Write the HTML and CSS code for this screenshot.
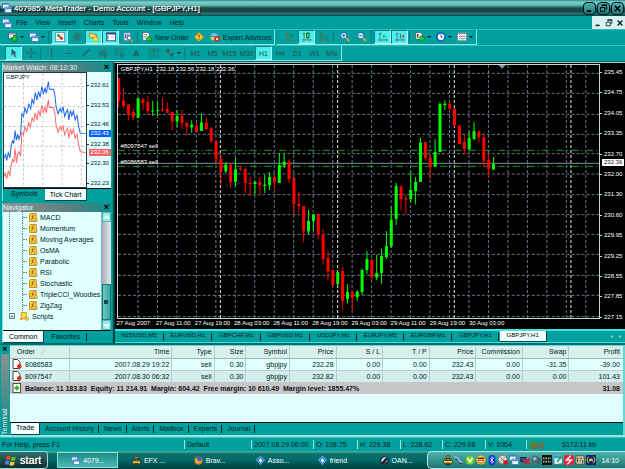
FILE: index.html
```html
<!DOCTYPE html>
<html lang="en">
<head>
<meta charset="utf-8">
<title>407985: MetaTrader - Demo Account - [GBPJPY,H1]</title>
<link rel="stylesheet" href="styles.css">
</head>
<body>
<svg class="defs" aria-hidden="true">
  <symbol id="i-windows" viewBox="0 0 12 12"><rect x=".5" y=".5" width="8" height="6" fill="#dff" stroke="#47b"/><path d="M1 1.5h7" stroke="#36c"/><rect x="3.5" y="5" width="8" height="6.5" fill="#eff" stroke="#47b"/><path d="M4 6.5h7" stroke="#58d" stroke-width="2"/></symbol>
  <symbol id="i-newchart" viewBox="0 0 12 12"><rect x=".5" y="1" width="9" height="7" fill="#eee" stroke="#456"/><path d="M1 2h8" stroke="#79b" stroke-width="2"/><path d="M8 4v8M4 8h8" stroke="#063" stroke-width="4"/><path d="M8 4.800v6.400M4.800 8h6.400" stroke="#2d2" stroke-width="2.200"/></symbol>
  <symbol id="i-market" viewBox="0 0 12 12"><rect x=".5" y=".5" width="11" height="11" fill="#fff" stroke="#68a"/><path d="M3 3l3 3" stroke="#2a3" stroke-width="3"/><path d="M6 6l3 3" stroke="#d32" stroke-width="3"/><path d="M8 3h2M2 9h2" stroke="#999"/></symbol>
  <symbol id="i-cross" viewBox="0 0 12 12" fill="none" stroke="#47605f"><circle cx="6" cy="6" r="3.500"/><path d="M6 0v12M0 6h12"/></symbol>
  <symbol id="i-navstar" viewBox="0 0 12 12"><path d="M.5 1.500h4l1 1.500H9v4H.5z" fill="#fd6" stroke="#a70"/><path d="M8 4.500l1.200 2.500 2.800.3-2 2 .5 2.700L8 10.700 5.500 12l.5-2.700-2-2 2.800-.3z" fill="#fe4" stroke="#b80" stroke-width=".6"/></symbol>
  <symbol id="i-terminal" viewBox="0 0 12 12"><rect x=".5" y="1" width="11" height="9.500" fill="#fff" stroke="#347"/><path d="M1 2h10" stroke="#347" stroke-width="2"/><path d="M2 4v5" stroke="#68b" stroke-width="2"/><path d="M5 5h5M5 7h5" stroke="#ccc"/></symbol>
  <symbol id="i-tester" viewBox="0 0 12 12"><rect x="1" y=".5" width="8" height="10" fill="#cde" stroke="#57a"/><path d="M3 7V3M5 8V2M7 6V3" stroke="#269"/><circle cx="7.500" cy="7" r="2.500" fill="#dff" stroke="#446"/><path d="M9.500 9l2.300 2.500" stroke="#d92" stroke-width="2"/></symbol>
  <symbol id="i-order" viewBox="0 0 12 12"><path d="M1 .5h6l2 2V10H1z" fill="#fff" stroke="#567"/><path d="M2.500 3h4M2.500 5h4M2.500 7h3" stroke="#888"/><path d="M8.500 5v7M5 8.500h7" stroke="#064" stroke-width="3.500"/><path d="M8.500 5.500v6M5.500 8.500h6" stroke="#2c3" stroke-width="2"/></symbol>
  <symbol id="i-diamond" viewBox="0 0 12 12"><path d="M6 .5L11.500 6 6 11.500.5 6z" fill="#fc3" stroke="#c80"/><path d="M6 3v3.500M6 8v1.200" stroke="#632" stroke-width="1.400"/></symbol>
  <symbol id="i-expert" viewBox="0 0 12 12"><ellipse cx="5" cy="6.500" rx="4.500" ry="3.500" fill="#ec5"/><path d="M.5 5C1 0 9 0 9.500 5z" fill="#7bf"/><path d="M0 5.500h10" stroke="#379"/><circle cx="8.500" cy="8.500" r="3.300" fill="#d22"/><rect x="7.300" y="7.300" width="2.400" height="2.400" fill="#fff"/></symbol>
  <symbol id="i-bars" viewBox="0 0 12 12" fill="none"><path d="M2.500 1v10M0 9.500h11M1 3l1.500-2L4 3M9.500 8l1.500 1.500L9.500 11" stroke="#764"/><path d="M6.500 3v5M5 7h1.500M6.500 4H8M9.500 1v5" stroke="#084"/></symbol>
  <symbol id="i-candles" viewBox="0 0 12 12" fill="none"><path d="M2.500 1v10M0 9.500h11M1 3l1.500-2L4 3M9.500 8l1.500 1.500L9.500 11" stroke="#764"/><path d="M7 0v9" stroke="#053"/><rect x="5.500" y="1.500" width="3" height="5" fill="#4e4" stroke="#053"/></symbol>
  <symbol id="i-line" viewBox="0 0 12 12" fill="none"><path d="M2.500 1v10M0 9.500h11M1 3l1.500-2L4 3M9.500 8l1.500 1.500L9.500 11" stroke="#764"/><path d="M2.500 7C5 2 6 3 7 4.500S9 7 11 7" stroke="#084"/></symbol>
  <symbol id="i-zoomin" viewBox="0 0 12 12"><path d="M7 7l4 4" stroke="#da3" stroke-width="2.400"/><circle cx="4.500" cy="4.500" r="3.700" fill="#dff" stroke="#25a"/><path d="M2.500 4.500h4M4.500 2.500v4" stroke="#25c" stroke-width="1.200"/></symbol>
  <symbol id="i-zoomout" viewBox="0 0 12 12"><path d="M7 7l4 4" stroke="#da3" stroke-width="2.400"/><circle cx="4.500" cy="4.500" r="3.700" fill="#dff" stroke="#25a"/><path d="M2.500 4.500h4" stroke="#25c" stroke-width="1.200"/></symbol>
  <symbol id="i-scroll" viewBox="0 0 12 12" fill="none"><path d="M2.500 1v10M0 9.500h11M1 3l1.500-2L4 3M9.500 8l1.500 1.500L9.500 11" stroke="#567"/><path d="M6 3l4 2.200L6 7.500z" fill="#3b5"/></symbol>
  <symbol id="i-shift" viewBox="0 0 12 12" fill="none"><path d="M2.500 1v10M0 9.500h11M1 3l1.500-2L4 3M9.500 8l1.500 1.500L9.500 11" stroke="#567"/><path d="M6.500 2v6" stroke="#265"/><path d="M11 3L7.500 5.200 11 7.500z" fill="#c43"/></symbol>
  <symbol id="i-indic" viewBox="0 0 12 12"><path d="M1 .5h6l1.500 2V9H1z" fill="#fff" stroke="#555"/><path d="M3 7V3h2M3 5h2" stroke="#333" fill="none"/><path d="M8 4.500v7M4.500 8h7" stroke="#063" stroke-width="3.500"/><path d="M8 5v6M5 8h6" stroke="#2d2" stroke-width="2"/></symbol>
  <symbol id="i-clock" viewBox="0 0 12 12"><circle cx="6" cy="6" r="4.800" fill="#eff" stroke="#25c" stroke-width="2"/><path d="M6 3v3.300h2" fill="none" stroke="#234"/></symbol>
  <symbol id="i-template" viewBox="0 0 12 12"><rect x=".5" y="1" width="11" height="9.500" fill="#fff" stroke="#789"/><path d="M1 2h10" stroke="#79b" stroke-width="1.500"/><path d="M2 6l2-1.500L6 6l2-1 2 .5" fill="none" stroke="#c33"/><path d="M2 8.500L4 7.500l2 1 4-1" fill="none" stroke="#396"/></symbol>
  <symbol id="i-cursor" viewBox="0 0 12 12"><path d="M3 .5l6.500 6H6.800l1.700 3.800-1.600.7L5.200 7.300 3 9.300z" fill="#456"/></symbol>
  <symbol id="i-plus" viewBox="0 0 12 12"><path d="M6 0v4.500M6 7.500V12M0 6h4.500M7.500 6H12M5.500 6h1" stroke="#3f5555" stroke-width="1.300"/></symbol>
  <symbol id="i-vline" viewBox="0 0 12 12"><path d="M5.500 1v10" stroke="#3f5555" stroke-width="1.300"/></symbol>
  <symbol id="i-hline" viewBox="0 0 12 12"><path d="M1.500 6.500h9" stroke="#3f5555" stroke-width="1.300"/></symbol>
  <symbol id="i-trend" viewBox="0 0 12 12"><path d="M1.500 10.500l9-9" stroke="#3f5555" stroke-width="1.300"/></symbol>
  <symbol id="i-channel" viewBox="0 0 12 12"><path d="M0 9l9-8M2 11l9-8M2 4l5 5M4 2l5 5M8 8v4M8 8h3M8 10h2M1 5h4" fill="none" stroke="#3f5555"/></symbol>
  <symbol id="i-fibo" viewBox="0 0 12 12"><path d="M0 1.500h10M0 4.500h10M0 7.500h10" stroke="#3f5555" stroke-dasharray="2 1"/><path d="M8 8v4M8 8.500h3M8 10.500h2" stroke="#3f5555"/></symbol>
  <symbol id="i-label" viewBox="0 0 12 12"><rect x="1" y="1" width="10" height="10" fill="none" stroke="#3f5555" stroke-dasharray="1 1"/><path d="M3 3.500h6M6 3.500v6" stroke="#3f5555"/></symbol>
  <symbol id="i-arrows" viewBox="0 0 12 12"><path d="M1 4l3-3 2 3-2 2zM7 6l4 1-3 4-2-2z" fill="#3f5555"/><path d="M3 5l5 4" stroke="#3f5555"/></symbol>
  <symbol id="i-fn" viewBox="0 0 10 10"><path d="M.5 1.500l1-1H8v7l1 1-1 1H.5z" fill="#fc4" stroke="#b80"/><path d="M6 2.500C4.500 1.500 4 3 4 4.500S3.500 8 2.300 7.300M2.500 4.500h3" fill="none" stroke="#852" stroke-width=".9"/><circle cx="7.500" cy="7.500" r="1.500" fill="#fe8" stroke="#a70" stroke-width=".8"/></symbol>
  <symbol id="i-script" viewBox="0 0 10 10"><path d="M1.500.5H7v7H3L.5 9V7h1z" fill="#fc4" stroke="#c90"/><path d="M3 2.500h3M3 4.500h3" stroke="#fe9"/><circle cx="7.800" cy="7.600" r="1.700" fill="#fe6" stroke="#b80" stroke-width=".8"/></symbol>
  <symbol id="i-trade" viewBox="0 0 10 10"><path d="M1 .5h4.500L8 3v6.500H1z" fill="#fff" stroke="#444"/><circle cx="7.300" cy="7.300" r="2.300" fill="#d31"/></symbol>
  <symbol id="i-balance" viewBox="0 0 10 10"><rect x="1" y=".5" width="7.500" height="9" fill="#fff" stroke="#555"/><path d="M4.800 2.500v5M2.300 5h5" stroke="#2b2" stroke-width="2"/></symbol>
  <symbol id="i-flag" viewBox="0 0 12 12"><path d="M2 1.500c2-1 3-.5 4 0L5 5.500c-1.500-.6-2.500-.5-4 .3z" fill="#e64a19"/><path d="M7 2c1.500.7 3 .7 5 0l-1.200 4C9 6.700 8 6.500 6 5.800z" fill="#6b3"/><path d="M.8 6.800c1.500-.8 2.500-.8 4 0l-1 4c-1.500-.8-2.500-.7-4 0z" fill="#48f"/><path d="M5.800 7c1.600.7 3 .8 4.800 0l-1 4c-1.700.8-3.200.8-4.800 0z" fill="#fc3"/></symbol>
  <symbol id="i-bee" viewBox="0 0 12 12"><circle cx="6" cy="3" r="2.800" fill="#432"/><ellipse cx="6" cy="8" rx="5.500" ry="3.500" fill="#ca3" stroke="#221"/><path d="M1 8h10M4 2.500h4" stroke="#fe9"/><path d="M2 6.500h8M3 10h6" stroke="#221"/></symbol>
  <symbol id="i-fox" viewBox="0 0 12 12"><circle cx="6" cy="6" r="5.500" fill="#e71"/><circle cx="6.500" cy="4.500" r="3.500" fill="#36c"/><path d="M1 3l3 1 2 3 4 0c-1 3-6 4-8 1z" fill="#fa3"/></symbol>
  <symbol id="i-gem" viewBox="0 0 12 12"><path d="M6 .5L11.500 5 6 11.500.5 5z" fill="#27d" stroke="#bdf" stroke-width=".8"/><path d="M6 3l2.500 2.500L6 9 3.500 5.500z" fill="#fff"/></symbol>
  <symbol id="i-disc" viewBox="0 0 12 12"><circle cx="6" cy="6" r="5.700" fill="#223"/><path d="M2 8C1 4 5 .8 9 2 5 3.500 6 6 2 8z" fill="#dee"/><path d="M10 4c1 4-2 6-5 5.500C9 8.500 8 6 10 4z" fill="#89a"/></symbol>
  <symbol id="i-restore" viewBox="0 0 10 10" fill="none" stroke="currentColor"><path d="M3.500 3V1.500h5v4H7"/><path d="M3 1.200h6" stroke-width="1.500"/><rect x="1.500" y="4" width="5" height="4.500"/></symbol>
  <symbol id="i-min" viewBox="0 0 10 10"><path d="M2 8h5" stroke="currentColor" stroke-width="2"/></symbol>
  <symbol id="i-close" viewBox="0 0 10 10"><path d="M2 2l6 6M8 2L2 8" stroke="currentColor" stroke-width="1.800"/></symbol>
  <symbol id="t-dots" viewBox="0 0 12 12"><path d="M1 2l4 2 2 3 4 3" fill="none" stroke="#9be" stroke-width="2"/><path d="M2 5l3 1M6 10h5" stroke="#236"/></symbol>
  <symbol id="t-v" viewBox="0 0 12 12"><circle cx="6" cy="6" r="5.500" fill="#7c2"/><path d="M3 3.500l3 5 3-5" fill="none" stroke="#fff" stroke-width="1.800"/></symbol>
  <symbol id="t-smile" viewBox="0 0 12 12"><circle cx="6" cy="6" r="5.500" fill="#fb3"/><path d="M2 4h8" stroke="#421" stroke-width="1.500"/><path d="M2.500 6.500h7c-1 4-6 4-7 0z" fill="#fff" stroke="#a30"/></symbol>
  <symbol id="t-bt" viewBox="0 0 12 12"><rect x="2" y="0" width="8" height="12" rx="4" fill="#13d"/><path d="M3.800 4l4.200 4-2 2V2l2 2-4.200 4" fill="none" stroke="#fff" stroke-width=".9"/></symbol>
  <symbol id="t-stop" viewBox="0 0 12 12"><circle cx="5.500" cy="5.500" r="5" fill="#ddd" stroke="#888"/><path d="M3 3l5 5M8 3L3 8" stroke="#b55"/><circle cx="9" cy="9" r="2.800" fill="#d11"/></symbol>
  <symbol id="t-off" viewBox="0 0 12 12"><rect x="1" y="3" width="6" height="5" fill="#447" stroke="#113"/><rect x="4" y="6" width="6" height="4" fill="#36a"/><path d="M5 4l7 7M12 4l-7 7" stroke="#e12" stroke-width="1.800"/></symbol>
  <symbol id="t-speak" viewBox="0 0 12 12"><circle cx="5" cy="5" r="4.500" fill="#567"/><circle cx="4.500" cy="4.500" r="2" fill="#abc"/><path d="M8 10c3-1 3-4 2-6" fill="none" stroke="#345" stroke-width="1.500"/></symbol>
  <symbol id="t-grid" viewBox="0 0 12 12"><rect width="12" height="12" fill="#111"/><path d="M1 4h10M1 8h10" stroke="#9a9" stroke-dasharray="2 1" stroke-width="2"/></symbol>
  <symbol id="t-note" viewBox="0 0 12 12"><path d="M1 1h9l1 9-9 1z" fill="#def"/><path d="M1 1h10v3H1z" fill="#39d"/><path d="M5 8l5-6" stroke="#2a3" stroke-width="2"/></symbol>
  <symbol id="t-red" viewBox="0 0 12 12"><rect width="12" height="12" rx="2" fill="#e23"/><path d="M8 1L3 6h6l-5 5" fill="none" stroke="#fff" stroke-width="1.600"/></symbol>
  <symbol id="t-doc" viewBox="0 0 12 12"><rect x="1" y="1" width="10" height="10" fill="#cca" stroke="#543"/><path d="M3 3v6M5 4h4M5 7h2M9 6v4" stroke="#432"/></symbol>
  <symbol id="t-wave" viewBox="0 0 12 12"><rect width="12" height="12" fill="#126"/><path d="M3 2c-2 3-2 5 0 8M9 2c2 3 2 5 0 8M5 4L4 8M7 4l1 4" fill="none" stroke="#fe3"/><circle cx="6" cy="6" r="1.300" fill="#fe3"/></symbol>
</svg>

<div class="desktop">
  <header class="titlebar">
    <svg class="ic"><use href="#i-windows"/></svg>
    <h1>407985: MetaTrader - Demo Account - [GBPJPY,H1]</h1>
    <div class="winbtns">
      <button aria-label="Minimize"><svg><use href="#i-min"/></svg></button>
      <button aria-label="Restore"><svg><use href="#i-restore"/></svg></button>
      <button aria-label="Close"><svg><use href="#i-close"/></svg></button>
    </div>
  </header>

  <nav class="menubar">
    <svg class="ic"><use href="#i-windows"/></svg>
    <button>File</button><button>View</button><button>Insert</button><button>Charts</button><button>Tools</button><button>Window</button><button>Help</button>
    <div class="mdibtns">
      <button aria-label="Minimize chart"><svg><use href="#i-min"/></svg></button>
      <button aria-label="Restore chart"><svg><use href="#i-restore"/></svg></button>
      <button aria-label="Close chart"><svg><use href="#i-close"/></svg></button>
    </div>
  </nav>

  <div class="toolrow">
    <div class="toolbar">
      <button class="tb drop" aria-label="New chart"><svg class="ic"><use href="#i-newchart"/></svg></button>
      <button class="tb drop" aria-label="Profiles"><svg class="ic"><use href="#i-windows"/></svg></button>
      <i class="sep"></i>
      <button class="tb on" aria-label="Market Watch"><svg class="ic"><use href="#i-market"/></svg></button>
      <button class="tb" aria-label="Data window"><svg class="ic"><use href="#i-cross"/></svg></button>
      <button class="tb on" aria-label="Navigator"><svg class="ic"><use href="#i-navstar"/></svg></button>
      <button class="tb on" aria-label="Terminal"><svg class="ic"><use href="#i-terminal"/></svg></button>
      <button class="tb" aria-label="Strategy tester"><svg class="ic"><use href="#i-tester"/></svg></button>
      <i class="sep"></i>
      <button class="tb wide"><svg class="ic"><use href="#i-order"/></svg>New Order</button>
      <button class="tb" aria-label="MetaEditor"><svg class="ic"><use href="#i-diamond"/></svg></button>
      <button class="tb wide"><svg class="ic"><use href="#i-expert"/></svg>Expert Advisors</button>
    </div>
    <div class="toolbar">
      <button class="tb" aria-label="Bar chart"><svg class="ic"><use href="#i-bars"/></svg></button>
      <button class="tb on" aria-label="Candlesticks"><svg class="ic"><use href="#i-candles"/></svg></button>
      <button class="tb" aria-label="Line chart"><svg class="ic"><use href="#i-line"/></svg></button>
      <i class="sep"></i>
      <button class="tb" aria-label="Zoom in"><svg class="ic"><use href="#i-zoomin"/></svg></button>
      <button class="tb" aria-label="Zoom out"><svg class="ic"><use href="#i-zoomout"/></svg></button>
      <i class="sep"></i>
      <button class="tb on" aria-label="Auto scroll"><svg class="ic"><use href="#i-scroll"/></svg></button>
      <button class="tb on" aria-label="Chart shift"><svg class="ic"><use href="#i-shift"/></svg></button>
      <i class="sep"></i>
      <button class="tb drop" aria-label="Indicators"><svg class="ic"><use href="#i-indic"/></svg></button>
      <button class="tb drop" aria-label="Periods"><svg class="ic"><use href="#i-clock"/></svg></button>
      <button class="tb drop" aria-label="Templates"><svg class="ic"><use href="#i-template"/></svg></button>
    </div>
  </div>

  <div class="toolrow">
    <div class="toolbar">
      <button class="tb on" aria-label="Cursor"><svg class="ic"><use href="#i-cursor"/></svg></button>
      <button class="tb" aria-label="Crosshair"><svg class="ic"><use href="#i-plus"/></svg></button>
      <i class="sep"></i>
      <button class="tb" aria-label="Vertical line"><svg class="ic"><use href="#i-vline"/></svg></button>
      <button class="tb" aria-label="Horizontal line"><svg class="ic"><use href="#i-hline"/></svg></button>
      <button class="tb" aria-label="Trendline"><svg class="ic"><use href="#i-trend"/></svg></button>
      <button class="tb" aria-label="Channel"><svg class="ic"><use href="#i-channel"/></svg></button>
      <button class="tb" aria-label="Fibonacci"><svg class="ic"><use href="#i-fibo"/></svg></button>
      <button class="tb letter">A</button>
      <button class="tb" aria-label="Text label"><svg class="ic"><use href="#i-label"/></svg></button>
      <button class="tb drop" aria-label="Arrows"><svg class="ic"><use href="#i-arrows"/></svg></button>
      <i class="sep"></i>
      <button class="tb">M1</button><button class="tb">M5</button><button class="tb">M15</button><button class="tb">M30</button><button class="tb on">H1</button><button class="tb">H4</button><button class="tb">D1</button><button class="tb">W1</button><button class="tb">MN</button>
    </div>
  </div>

  <main class="work">
    <aside class="side">
      <section class="pane market">
        <h2>Market Watch: 08:10:30<button aria-label="Close Market Watch">×</button></h2>
        <div class="tick">
          <div class="tickplot">
            <span class="symbol">GBPJPY</span>
            <svg viewBox="12 40 250 336" preserveAspectRatio="none">
              <path class="tickgrid" d="M72 40v336M131 40v336M190 40v336M249 40v336M12 80h250M12 139h250M12 198h250M12 256h250M12 315h250"/>
              <path class="bid" d="M12 345L16 335 20 352 25 330 30 342 34 310 38 295 42 302 46 262 50 305 54 278 58 272 63 285 67 215 72 222 76 198 82 212 88 186 93 200 98 172 103 182 108 158 113 178 118 150 123 168 128 135 133 155 138 140 142 158 148 118 151 142 164 142 168 160 172 195 178 215 184 198 188 208 193 196 198 222 202 212 207 202 211 232 216 205 220 220 225 206 230 232 236 220 241 252 246 272 262 274"/>
              <path class="ask" d="M12 290L17 280 20 298 25 275 30 290 34 255 38 240 42 247 46 210 50 238 54 222 58 235 63 218 67 160 72 168 76 143 82 158 88 132 94 146 98 118 103 130 108 98 113 120 118 95 123 112 128 80 133 100 138 85 142 100 148 65 151 88 164 88 168 105 172 140 178 160 184 145 188 155 193 140 198 168 202 158 207 148 211 178 216 150 220 166 225 152 230 178 236 165 241 198 246 218 262 219"/>
            </svg>
          </div>
          <ol class="tickaxis">
            <li>232.61</li><li>232.53</li><li>232.46</li><li>232.38</li><li>232.30</li><li>232.23</li>
          </ol>
          <span class="mark ask-mark">232.43</span><span class="mark bid-mark">232.36</span>
        </div>
        <div class="tabs"><button>Symbols</button><button class="cur">Tick Chart</button></div>
      </section>

      <section class="pane navigator">
        <h2>Navigator<button aria-label="Close Navigator">×</button></h2>
        <div class="treebox">
          <div class="tree">
            <ul>
              <li><svg><use href="#i-fn"/></svg>MACD</li>
              <li><svg><use href="#i-fn"/></svg>Momentum</li>
              <li><svg><use href="#i-fn"/></svg>Moving Averages</li>
              <li><svg><use href="#i-fn"/></svg>OsMA</li>
              <li><svg><use href="#i-fn"/></svg>Parabolic</li>
              <li><svg><use href="#i-fn"/></svg>RSI</li>
              <li><svg><use href="#i-fn"/></svg>Stochastic</li>
              <li><svg><use href="#i-fn"/></svg>TripleCCI_Woodies</li>
              <li><svg><use href="#i-fn"/></svg>ZigZag</li>
            </ul>
            <p class="branch"><button aria-label="Expand Scripts">+</button><svg><use href="#i-script"/></svg>Scripts</p>
          </div>
          <div class="scroll">
            <button aria-label="Scroll up"><svg viewBox="0 0 8 8"><path d="M1.500 5.500L4 3l2.500 2.500"/></svg></button>
            <div class="track"><div class="thumb"></div></div>
            <button aria-label="Scroll down"><svg viewBox="0 0 8 8"><path d="M1.500 3L4 5.500 6.500 3"/></svg></button>
          </div>
        </div>
        <div class="tabs"><button class="cur">Common</button><button>Favorites</button></div>
      </section>
    </aside>

    <section class="chartwin">
      <div class="chart">
        <div class="plot">
          <svg id="plot" viewBox="15 12 1449 759" preserveAspectRatio="none"></svg>
          <span class="quote">GBPJPY,H1&nbsp; 232.18 232.56 232.18 232.36</span>
          <span class="trade first">#8097547 sell</span>
          <span class="trade second">#8086583 sell</span>
        </div>
        <div class="prices">
          <ol>
            <li>235.45</li><li>234.75</li><li>234.05</li><li>233.35</li><li>232.70</li><li>232.00</li><li>231.30</li><li>230.60</li><li>229.95</li><li>229.25</li><li>228.55</li><li>227.85</li><li>227.15</li>
          </ol>
          <span class="now">232.36</span>
        </div>
        <ol class="times">
          <li>27 Aug 2007</li><li>27 Aug 11:00</li><li>27 Aug 19:00</li><li>28 Aug 03:00</li><li>28 Aug 11:00</li><li>28 Aug 19:00</li><li>29 Aug 03:00</li><li>29 Aug 11:00</li><li>29 Aug 19:00</li><li>30 Aug 03:00</li>
        </ol>
      </div>
      <div class="tabs charttabs">
        <button>NZDUSD,M5</button><button>EURUSD,H1</button><button>GBPCHF,M1</button><button>GBPUSD,M1</button><button>USDJPY,M1</button><button>EURJPY,M5</button><button>EURGBP,M1</button><button>GBPJPY,H1</button><button class="cur">GBPJPY,H1</button>
        <span class="tabnav"><button aria-label="Previous tabs">◂</button><button aria-label="Next tabs">▸</button></span>
      </div>
    </section>
  </main>

  <section class="terminal">
    <div class="grip"><button aria-label="Close Terminal">×</button><h2>Terminal</h2></div>
    <div class="termbody">
      <div class="sheet">
        <table>
          <colgroup><col class="c-order"><col class="c-time"><col class="c-type"><col class="c-size"><col class="c-sym"><col class="c-num"><col class="c-num"><col class="c-num"><col class="c-num"><col class="c-num"><col class="c-num"><col></colgroup>
          <thead><tr><th>Order <span class="sort">⁄</span></th><th>Time</th><th>Type</th><th>Size</th><th>Symbol</th><th>Price</th><th>S / L</th><th>T / P</th><th>Price</th><th>Commission</th><th>Swap</th><th>Profit</th></tr></thead>
          <tbody>
            <tr><td><svg><use href="#i-trade"/></svg>8086583</td><td>2007.08.29 19:22</td><td>sell</td><td>0.30</td><td>gbpjpy</td><td>232.28</td><td>0.00</td><td>0.00</td><td>232.43</td><td>0.00</td><td>-31.35</td><td>-39.00</td></tr>
            <tr class="alt"><td><svg><use href="#i-trade"/></svg>8097547</td><td>2007.08.30 06:32</td><td>sell</td><td>0.30</td><td>gbpjpy</td><td>232.82</td><td>0.00</td><td>0.00</td><td>232.43</td><td>0.00</td><td>0.00</td><td>101.43</td></tr>
            <tr class="sum"><td colspan="11"><svg><use href="#i-balance"/></svg>Balance: 11 183.83&nbsp; Equity: 11 214.91&nbsp; Margin: 604.42&nbsp; Free margin: 10 610.49&nbsp; Margin level: 1855.47%</td><td>31.08</td></tr>
          </tbody>
        </table>
      </div>
      <div class="tabs"><button class="cur">Trade</button><button>Account History</button><button>News</button><button>Alerts</button><button>Mailbox</button><button>Experts</button><button>Journal</button></div>
    </div>
  </section>

  <footer class="status">
    <span>For Help, press F1</span><span>Default</span><span>2007.08.29 06:00</span><span>O: 228.75</span><span>H: 229.38</span><span>L: 228.62</span><span>C: 229.08</span><span>V: 1064</span><span><svg viewBox="0 0 15 9"><path d="M1 1v8M3 1v8M5 1v8M7 2v7" stroke="#2a3"/><path d="M2 2v7M4 2v7M6 2v7M8 3v6M10 3v6M12 2v7M14 1v8" stroke="#a52"/></svg>5172/11 kb</span>
  </footer>

  <nav class="taskbar">
    <button class="start"><svg><use href="#i-flag"/></svg>start</button>
    <div class="tasks">
      <button class="cur"><svg><use href="#i-windows"/></svg>4079...</button>
      <button><svg><use href="#i-bee"/></svg>EFX ...</button>
      <button><svg><use href="#i-fox"/></svg>Brav...</button>
      <button><svg><use href="#i-gem"/></svg>Asso...</button>
      <button><svg><use href="#i-gem"/></svg>friend</button>
      <button><svg><use href="#i-disc"/></svg>OAN...</button>
    </div>
    <div class="tray">
      <svg><use href="#i-bee"/></svg><svg><use href="#t-dots"/></svg><svg><use href="#t-v"/></svg><svg><use href="#t-smile"/></svg><svg><use href="#t-bt"/></svg><svg><use href="#t-stop"/></svg><svg><use href="#i-windows"/></svg><svg><use href="#t-off"/></svg><svg><use href="#t-speak"/></svg><svg><use href="#t-grid"/></svg><svg><use href="#t-note"/></svg><svg><use href="#t-red"/></svg><svg><use href="#t-doc"/></svg><svg><use href="#t-wave"/></svg>
      <time>14:10</time>
    </div>
  </nav>
</div>
<script src="script.js"></script>
</body>
</html>
```
FILE: styles.css
```css
:root {
  --teal: #00a09f;
  --deep: #006b6c;
  --paper: #e2ffff;
  --ink: #001c1c;
}
* { box-sizing: border-box; }
body {
  margin: 0;
  font: 7px/9px "Liberation Sans", Arial, sans-serif;
  color: var(--ink);
  background: var(--teal);
  overflow: hidden;
}
button {
  font: inherit;
  color: inherit;
  background: none;
  border: 0;
  padding: 0;
  white-space: nowrap;
}
h1, h2, ul, ol, p { margin: 0; padding: 0; font: inherit; list-style: none; }
svg { display: block; flex: none; }
.defs { position: absolute; width: 0; height: 0; }
.ic { width: 10px; height: 10px; }

.desktop {
  display: grid;
  grid-template-columns: minmax(0, 1fr);
  grid-template-rows: 16px 13px 16px 16px minmax(0, 3fr) minmax(0, 1fr) 14px 18px;
  height: 100vh;
}

/* Title bar */
.titlebar {
  display: flex;
  align-items: center;
  gap: 2px;
  padding: 0 1px 0 2px;
  color: #fff;
  background: linear-gradient(#2a8a88 0, #7ccfca 2px, #63bcb7 5px, #1b4d4c 8px, #174342 11px, #277a78 14px, #043b3b 16px);
}
.titlebar h1 { flex: 1; font-size: 8px; text-shadow: 1px 1px 1px #000, 0 0 1px #fff; white-space: nowrap; }
.winbtns { display: flex; gap: 1px; }
.winbtns button {
  display: grid;
  place-items: center;
  width: 13px;
  height: 13px;
  border: 1px solid #012;
  border-radius: 4px;
  background: linear-gradient(#4fb3ae, #1f7774);
  color: #000;
}
.winbtns svg { width: 9px; height: 9px; }

/* Menu bar */
.menubar { display: flex; align-items: center; padding-left: 2px; }
.menubar > button { padding: 0 4px; }
.mdibtns { display: flex; margin-left: auto; align-self: stretch; background: #d8f4f2; }
.mdibtns button { display: grid; place-items: center; width: 11px; color: #123; }
.mdibtns svg { width: 8px; height: 8px; }

/* Toolbars */
.toolrow { display: flex; gap: 2px; border-top: 1px solid #35c0be; }
.toolbar {
  display: flex;
  align-items: stretch;
  padding-left: 5px;
  padding-right: 1px;
  border-right: 1px solid #8fe6e3;
  border-bottom: 1px solid #8fe6e3;
  color: #2a4a49;
}
.toolbar + .toolbar { padding-left: 4px; }
.tb { display: flex; align-items: center; justify-content: center; width: 17px; }
.tb.on { background: #48f0f0; border: 1px solid #0a7f80; border-right-color: #b5ffff; border-bottom-color: #b5ffff; }
.tb.wide { width: auto; gap: 3px; padding: 0 2px; color: var(--ink); }
.tb.drop { width: 21px; gap: 2px; }
.tb.drop::after { content: ""; border: 2px solid transparent; border-top-color: #012; border-bottom: 0; }
.letter { font-weight: bold; font-size: 8px; }
.sep { width: 1px; margin: 1px 2px 1px 1px; border-left: 1px solid #067c7c; }

/* Work area */
.work { display: flex; min-height: 0; border-top: 1px solid var(--deep); }
.side {
  display: grid;
  grid-template-columns: minmax(0, 1fr);
  grid-template-rows: 137fr 139fr;
  gap: 2px;
  width: 18%;
  padding: 1px 1px 0 2px;
  border-right: 1px solid #0a8c8c;
}
.pane { display: flex; flex-direction: column; min-height: 0; border-left: 1px solid #7be8e6; }
.pane h2 {
  display: flex;
  justify-content: space-between;
  height: 9px;
  color: #dff;
  background: linear-gradient(90deg, #8f9494, #5d7f80 60%, #0f8c8c);
}
.pane h2 button, .grip button { color: #000; font: bold 9px/9px "Liberation Sans", sans-serif; width: 8px; }
.tabs { display: flex; height: 12px; flex: none; }
.tabs button { position: relative; padding: 0 7px 2px; }
.tabs button:not(.cur)::after {
  content: "";
  position: absolute;
  right: 0;
  top: 2px;
  height: 8px;
  border-right: 1px solid #022;
}
.tabs .cur { background: #f2ffff; color: #000; border: 1px solid #045; border-top: 0; border-left: 0; }

.tick { position: relative; flex: 1; display: flex; min-height: 0; background: var(--paper); border-bottom: 1px solid #011; font-size: 6px; }
.tickplot { position: relative; flex: 1; background: #fff; border: 1px solid #234; }
.tickplot svg { position: absolute; width: 100%; height: 100%; }
.symbol { position: absolute; left: 2px; top: 0; z-index: 1; }
.tickplot path { fill: none; stroke-width: 3; }
.tickplot .tickgrid { stroke: #c6cccc; stroke-dasharray: 8 6; }
.tickplot .bid { stroke: #ff6a6a; }
.tickplot .ask { stroke: #1565f0; }
.tickaxis { display: flex; flex-direction: column; justify-content: space-between; width: 24px; padding: 9px 0 0 4px; }
.tickaxis li::before { content: ""; position: absolute; width: 2px; margin: 4px 0 0 -4px; border-top: 1px solid #234; }
.mark { position: absolute; right: 0; width: 22px; padding-left: 2px; line-height: 7px; color: #fff; }
.ask-mark { top: 50%; background: #0b63f6; }
.bid-mark { top: 66%; background: #ff6363; }
.market .tabs { padding-left: 1px; }
.market .tabs .cur { padding: 0 5px; }
.market .tabs button:not(.cur)::after { display: none; }

.treebox { flex: 1; display: flex; min-height: 0; background: var(--paper); overflow: hidden; border-bottom: 1px solid #011; }
.tree { flex: 1; min-width: 0; padding: 0 0 0 6px; }
.tree ul { padding-left: 12px; border-left: 1px dotted #577; }
.tree li { display: flex; align-items: center; height: 11px; gap: 2px; border-left: 1px dotted #577; white-space: nowrap; }
.tree li::before { content: ""; width: 4px; flex: none; border-top: 1px dotted #577; }
.tree svg { width: 9px; height: 9px; }
.branch { display: flex; align-items: center; gap: 3px; height: 11px; }
.branch button { width: 6px; height: 6px; margin-right: 2px; border: 1px solid #688; background: #fff; font-size: 6px; line-height: 3px; }
.scroll { display: flex; flex: none; flex-direction: column; width: 10px; border-left: 1px solid #7bb; }
.scroll button { height: 10px; background: #9fe9e6; border: 1px solid #4fb7b5; }
.scroll svg { width: 7px; height: 8px; fill: none; stroke: #fff; stroke-width: 2; }
.track { flex: 1; display: flex; flex-direction: column; justify-content: flex-end; background: linear-gradient(90deg, #aab, #e5ecec); }
.thumb { height: 37%; border: 1px solid #1d7472; background: linear-gradient(90deg, #6ac9c5, #3da39f); display: grid; place-items: center; }
.thumb::after { content: ""; width: 4px; height: 4px; background: #174a4a; }
.navigator .cur { padding: 0 6px; }

/* Price chart */
.chartwin { flex: 1; min-width: 0; display: flex; flex-direction: column; border-left: 2px solid #044; border-top: 1px solid #9cc; }
.chart {
  flex: 1;
  min-height: 0;
  display: grid;
  grid-template-columns: minmax(0, 1fr) 25px;
  grid-template-rows: minmax(0, 1fr) 10px;
  padding: 1px 0 0 2px;
  background: #000;
  color: #fff;
  font-size: 6px;
}
.plot { position: relative; border: 1px solid #c9d6d2; }
.plot svg { position: absolute; width: 100%; height: 100%; }
.plot span { position: absolute; left: 3px; line-height: 7px; }
.quote { top: 1px; }
.first { top: 31%; }
.second { top: 37%; }
.prices { position: relative; grid-row: 1 / 3; grid-column: 2; }
.prices ol { height: 100%; display: flex; flex-direction: column; justify-content: space-between; padding: 4px 0 8px 4px; }
.prices li { line-height: 8px; }
.prices li::before { content: ""; position: absolute; width: 2px; margin: 4px 0 0 -4px; border-top: 1px solid #cdd; }
.now { position: absolute; top: 36%; left: 2px; right: 1px; padding-left: 2px; line-height: 7px; background: #fff; color: #122; }
.times { display: flex; white-space: nowrap; }
.times li { flex: 0 0 8.1%; }

.grid { stroke: #65768a; stroke-width: 3; fill: none; stroke-dasharray: 9 6; }
.day { stroke: #e8e8e8; stroke-width: 3; stroke-dasharray: 9 6; }
.level { stroke: #1a9c1a; stroke-width: 3; stroke-dasharray: 22 9 4 9; }
.price { stroke: #7c8ea0; stroke-width: 3; }
.up { stroke: #0f0; }
.down { stroke: #f00; }
.wick { stroke-width: 3; }
.body { stroke-width: 9; }

.charttabs { height: 14px; border-top: 2px solid #3fe4e2; border-bottom: 1px solid #3fe4e2; font-size: 6px; }
.charttabs .cur { margin-left: 1px; }
.tabnav { display: flex; margin-left: auto; color: #8cc; }
.tabs .tabnav button { padding: 0 3px; }
.tabs .tabnav button::after { display: none; }

/* Terminal */
.terminal { display: flex; min-height: 0; border-top: 2px solid var(--deep); border-bottom: 2px solid #8fe6e3; }
.grip { width: 10px; flex: none; display: flex; flex-direction: column; align-items: center; }
.grip h2 { flex: 1; width: 8px; writing-mode: vertical-rl; transform: rotate(180deg); color: #dff; line-height: 8px; background: linear-gradient(#0b8b8b, #8b9090); }
.termbody { flex: 1; min-width: 0; display: flex; flex-direction: column; border-right: 2px solid #5fd8d6; }
.sheet { flex: 1; min-height: 0; overflow: hidden; background: var(--paper); border-bottom: 1px solid #011; border-top: 1px solid #5fd8d6; }
table { width: 100%; table-layout: fixed; border-collapse: collapse; }
th, td { height: 12px; padding: 0 2px; text-align: right; font-weight: normal; white-space: nowrap; border-right: 1px solid #b5cfcd; }
th { background: #d9efec; border-bottom: 1px solid #9dbab8; }
tr > :first-child { text-align: left; }
th:first-child { padding-left: 7px; }
th:last-child, td:last-child { border-right: 0; padding-right: 3px; }
td svg { display: inline-block; vertical-align: -2px; width: 10px; height: 10px; margin-right: 3px; }
.sort { color: #8aa; padding-left: 6px; }
.alt td { background: #d3eeec; border-top: 1px solid #b5cfcd; }
.sum td { background: #c6c6c8; font-weight: bold; border: 0; color: #111; }
.c-order { width: 9.7%; }
.c-time { width: 16.7%; }
.c-type { width: 6.9%; }
.c-size { width: 5.2%; }
.c-sym { width: 7.1%; }
.c-num { width: 7.6%; }
.terminal .tabs { padding-left: 1px; }
.terminal .tabs button { padding: 0 5px 2px 5px; }

/* Status bar */
.status {
  display: grid;
  grid-template-columns: 185fr 67fr 62fr 44fr 43fr 42fr 43fr 41fr 98fr;
  align-items: center;
  border-top: 1px solid #35c0be;
}
.status span { display: flex; gap: 18px; padding-left: 2px; white-space: nowrap; border-right: 1px solid #8fe6e3; }
.status span:last-child { border: 0; }
.status svg { width: 15px; height: 9px; }

/* Taskbar */
.taskbar { display: flex; align-items: stretch; color: #fff; background: linear-gradient(#4fb0ab, #0d6f6d 3px, #006a68 9px, #003f3f); }
.start { display: flex; align-items: center; gap: 4px; width: 48px; padding-left: 5px; font-size: 11px; text-shadow: 0 0 1px #fff, 1px 1px 1px #000; border: 1px solid #9fd8d5; border-left: 0; border-radius: 0 4px 4px 0; background: linear-gradient(#2f6f6d, #0c2f2f); }
.start svg { width: 11px; height: 11px; }
.tasks { flex: 1; display: grid; grid-template-columns: repeat(6, 1fr); gap: 1px; padding-left: 9px; min-width: 0; }
.tasks button { display: flex; align-items: center; gap: 3px; padding-left: 13px; margin: 1px 0; }
.tasks svg { width: 9px; height: 9px; }
.tasks .cur { border: 1px solid #8fe0dc; background: linear-gradient(#1a8c88, #4fb7b2); }
.tray { display: flex; align-items: center; gap: 1px; padding: 0 6px 0 15px; border: 1px solid #b5e8e5; border-right: 0; border-radius: 5px 0 0 5px; background: linear-gradient(#4fb3ae, #1c7775); }
.tray svg { width: 10px; height: 10px; }
.tray time { padding-left: 4px; }
```
FILE: script.js
```js
// Each candle: high, body top, body bottom, low, direction (1 = up, 0 = down).
const candles = [
  [51,51,120,141,0],[80,119,135,140,0],[129,131,160,177,0],[141,153,169,178,0],[112,112,171,171,1],
  [111,115,126,147,0],[104,123,150,162,0],[119,149,151,165,1],[123,147,150,165,1],[110,144,149,152,0],
  [125,144,156,156,0],[153,153,181,208,0],[147,165,181,198,1],[147,164,186,205,0],[185,185,198,223,0],
  [178,191,199,216,1],[186,194,213,213,0],[157,184,210,210,1],[170,185,204,207,0],[198,202,240,246,0],
  [240,240,294,306,0],[280,294,333,372,0],[303,311,331,336,1],[305,311,363,382,0],[291,325,363,376,1],
  [316,322,325,330,0],[322,324,366,396,0],[347,366,369,405,0],[360,363,369,400,1],[347,363,373,403,0],
  [341,371,375,396,1],[333,348,373,388,1],[342,348,364,385,0],[276,312,366,366,1],[276,302,313,321,1],
  [294,302,354,366,0],[351,351,429,460,0],[393,429,435,455,0],[435,435,511,543,0],[447,480,511,519,1],
  [459,461,480,510,1],[459,459,522,534,0],[504,522,594,611,0],[570,591,632,658,0],[627,627,672,676,0],
  [630,633,669,675,1],[618,630,720,745,0],[669,693,714,727,1],[690,693,711,748,0],[687,692,708,721,1],
  [623,627,693,702,1],[570,594,627,639,1],[594,597,648,657,0],[582,636,650,657,1],[564,585,636,668,1],
  [510,555,588,594,1],[438,476,556,561,1],[366,375,474,492,1],[372,377,414,447,0],[402,412,416,459,0],
  [330,387,414,423,1],[348,363,390,430,1],[230,245,363,363,1],[243,243,291,299,0],[280,291,318,354,0],
  [234,273,317,317,1],[123,129,273,273,1],[117,128,132,147,1],[120,129,143,150,0],[143,143,193,198,0],
  [193,193,249,249,0],[222,243,265,281,0],[211,231,265,268,1],[183,210,234,238,1],[207,212,228,245,0],
  [222,228,300,317,0],[279,297,324,351,0],[288,309,326,326,1]
];
const rows = [37, 97, 160, 220, 278, 339, 401, 461, 520, 580, 643, 703, 767];
const days = [323, 676, 1027, 1378];

const path = (cls, d) => `<path class="${cls}" d="${d}"/>`;
let out = path("grid", rows.map(y => `M15 ${y}H1464`).join(""));
let cols = "";
for (let x = 75; x < 1464; x += 58.6) cols += `M${x.toFixed(1)} 12V771`;
out += path("grid", cols);
out += path("day", days.map(x => `M${x} 12V771`).join(""));
out += path("price", "M15 307H1464");
out += path("level", "M15 268H1464M15 316H1464");
candles.forEach(([hi, top, bottom, lo, up], i) => {
  const x = (17 + 14.65 * i).toFixed(1);
  const dir = up ? "up" : "down";
  out += path(`${dir} wick`, `M${x} ${hi}V${lo}`) + path(`${dir} body`, `M${x} ${top}V${Math.max(bottom, top + 3)}`);
});
out += '<path fill="#8494a8" d="M1160 12h22l-11 11z"/>';
document.getElementById("plot").innerHTML = out;
```
